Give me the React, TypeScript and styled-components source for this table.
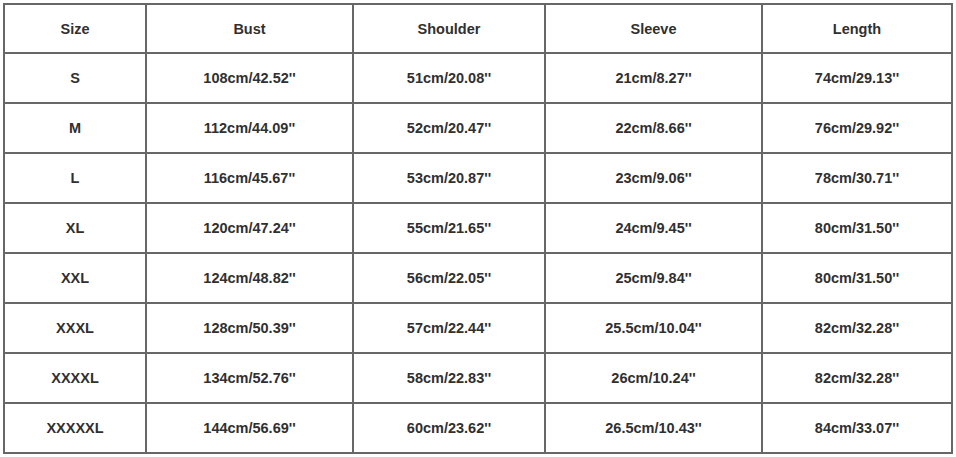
import React from "react";
import styled, { createGlobalStyle } from "styled-components";

const GlobalStyle = createGlobalStyle`
  html, body {
    margin: 0;
    padding: 0;
    background: #ffffff;
  }
`;

const Grid = styled.div`
  margin: 3px 0 0 3px;
  display: grid;
  grid-template-columns: 140px 205px 190px 215px 188px;
  grid-template-rows: 47px repeat(8, 48px);
  gap: 2px;
  padding: 2px;
  width: max-content;
  background: #676767;
`;

const Cell = styled.div`
  display: flex;
  align-items: center;
  justify-content: center;
  background: #ffffff;
  font-family: "Liberation Sans", Arial, sans-serif;
  font-weight: bold;
  font-size: 14.5px;
  color: #303030;
  white-space: nowrap;
`;

const headers = ["Size", "Bust", "Shoulder", "Sleeve", "Length"];

const rows: string[][] = [
  ["S", "108cm/42.52''", "51cm/20.08''", "21cm/8.27''", "74cm/29.13''"],
  ["M", "112cm/44.09''", "52cm/20.47''", "22cm/8.66''", "76cm/29.92''"],
  ["L", "116cm/45.67''", "53cm/20.87''", "23cm/9.06''", "78cm/30.71''"],
  ["XL", "120cm/47.24''", "55cm/21.65''", "24cm/9.45''", "80cm/31.50''"],
  ["XXL", "124cm/48.82''", "56cm/22.05''", "25cm/9.84''", "80cm/31.50''"],
  ["XXXL", "128cm/50.39''", "57cm/22.44''", "25.5cm/10.04''", "82cm/32.28''"],
  ["XXXXL", "134cm/52.76''", "58cm/22.83''", "26cm/10.24''", "82cm/32.28''"],
  ["XXXXXL", "144cm/56.69''", "60cm/23.62''", "26.5cm/10.43''", "84cm/33.07''"],
];

export default function App() {
  return (
    <>
      <GlobalStyle />
      <Grid>
        {headers.map((h) => (
          <Cell key={h}>{h}</Cell>
        ))}
        {rows.map((row) =>
          row.map((value, i) => <Cell key={row[0] + i}>{value}</Cell>)
        )}
      </Grid>
    </>
  );
}
